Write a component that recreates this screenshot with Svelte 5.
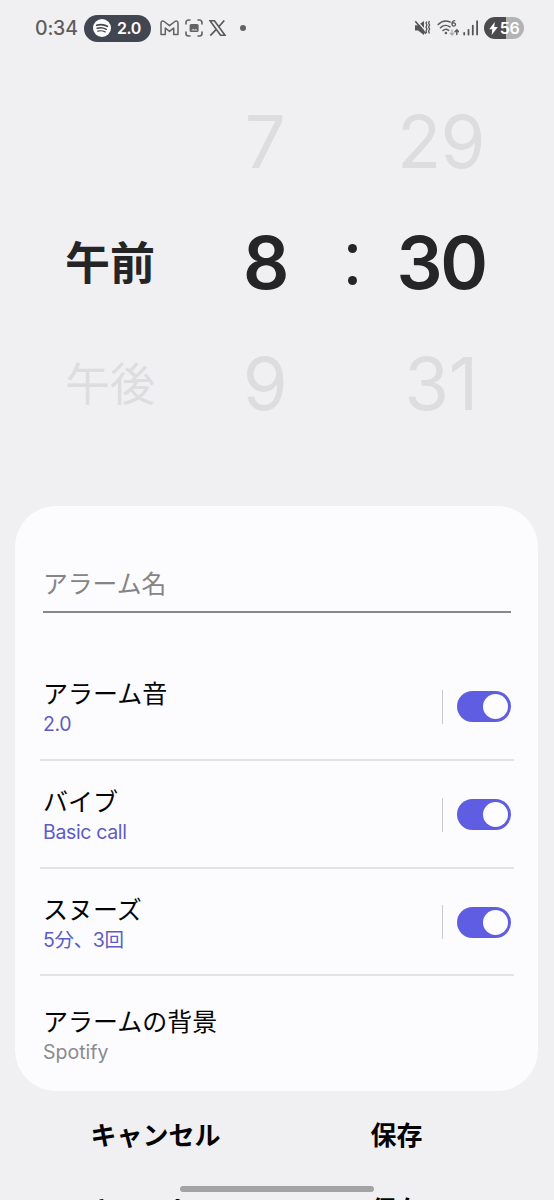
<script>
  let periods = ["", "午前", "午後"];
  let hours = [7, 8, 9];
  let minutes = [29, 30, 31];

  let name = $state("");
  let settings = $state([
    { title: "アラーム音", detail: "2.0", on: true },
    { title: "バイブ", detail: "Basic call", on: true },
    { title: "スヌーズ", detail: "5分、3回", on: true },
    { title: "アラームの背景", detail: "Spotify" },
  ]);
</script>

<div class="screen">
  <header class="status">
    <span class="clock">0:34</span>
    <div class="media">
      <svg width="18" height="18" viewBox="0 0 18 18">
        <circle cx="9" cy="9" r="9" fill="#fff" />
        <g fill="none" stroke="#424650" stroke-linecap="round">
          <path d="M3.700 6.300c3.600-1.100 7.400-.8 10.700 1" stroke-width="1.700" />
          <path d="M4.200 9.300c3-.9 6.300-.6 9.100 1" stroke-width="1.500" />
          <path d="M4.700 12.100c2.600-.7 5.100-.4 7.500.8" stroke-width="1.200" />
        </g>
      </svg>
      <span>2.0</span>
    </div>
    <div class="notices">
      <svg width="19" height="16" viewBox="0 0 19 16" fill="none" stroke="#626265" stroke-width="1.500" stroke-linejoin="round">
        <path d="M1 14.500V3C1 1 2.800.5 4.100 1.500l5.400 4.200 5.400-4.200C16.200.5 18 1 18 3v11.500h-4.300V8l-4.200 3.400L5.300 8v6.500Z" />
      </svg>
      <svg width="18" height="18" viewBox="0 0 18 18" fill="none" stroke="#626265" stroke-width="1.600" stroke-linecap="round">
        <path d="M1 5V3.500A2.500 2.500 0 0 1 3.500 1H5M13 1h1.500A2.500 2.500 0 0 1 17 3.500V5M17 13v1.500a2.500 2.500 0 0 1-2.500 2.500H13M5 17H3.500A2.500 2.500 0 0 1 1 14.500V13" />
        <rect x="4.600" y="5" width="9" height="8" rx="1.500" fill="#626265" stroke="none" />
        <path d="m6 11.500 2.200-1.800 1.500 1L11 9.700l1.500 1.800Z" fill="#d0d0d2" stroke="none" />
      </svg>
      <svg width="17" height="16" viewBox="0 0 17 16" fill="none" stroke="#5a5a5d">
        <path d="M1 .7h4.400L16 15.300h-4.400Z" stroke-width="1.600" />
        <path d="M15.300.5 9.500 7M7.300 9.300 1.300 15.600" stroke-width="1.700" />
      </svg>
    </div>
    <i class="more"></i>
    <div class="radios">
      <svg width="17" height="18" viewBox="0 0 17 18" fill="none" stroke="#555558">
        <path d="M1 6.300h3L10 2v14l-6-4.500H1Z" fill="#555558" stroke="none" />
        <path d="m2.700 1.500 9 10.500" stroke="#f0f0f2" stroke-width="1.300" />
        <path d="m1.300 2.200 10.500 12.600" stroke-width="1.600" />
        <path d="M12.700 2.500 12 4l.9 2-.9 2 .9 2-.9 2 .7 2M15.400 2l-.8 2 1 2-1 2 1 2-1 2 .8 2.500" stroke-width="1.300" />
      </svg>
      <svg width="22" height="18" viewBox="0 0 22 18" fill="none" stroke="#5c5c5f" stroke-width="1.600" stroke-linecap="round">
        <path d="M1.200 5.500C4.500 2 9 1.200 13 3M3.500 8.700c2.500-2.500 6.500-2.900 9.500-.8M6 11.500c1.700-1.500 4-1.500 5.600-.2" />
        <circle cx="8.900" cy="14" r="1.300" fill="#5c5c5f" stroke="none" />
        <path d="M17.700 1.600c-2 .1-3 2-2.700 4 .5 2.200 3.600 1.800 3.500-.2-.1-1.900-2.700-2-3.400-.5" stroke-width="1.400" />
        <path d="M15 11v5m-1.700-1.800L15 16l1.700-1.800" stroke="#adadb0" stroke-width="1.300" />
        <path d="M19.800 15.500V11M18 12.700l1.800-1.900 1.800 1.900" stroke-width="1.500" />
      </svg>
      <svg class="signal" width="16" height="16" viewBox="0 0 16 16" stroke="#555558" stroke-width="1.800" stroke-linecap="round">
        <path d="M1.200 12.800v1.800M5.500 9.800v4.800M9.800 5.600v9M14.100 1.200v13.400" />
      </svg>
      <div class="battery">
        <svg width="9" height="13" viewBox="0 0 8 12"><path d="M5.200 0 0 6.700h2.900L2.300 12 8 4.600H4.700Z" fill="#fff" /></svg>
        <span>56</span>
      </div>
    </div>
  </header>

  <section class="picker">
    <div class="wheel period">
      {#each periods as value, i}
        <span class:current={i === 1}>{value}</span>
      {/each}
    </div>
    <div class="wheel hour">
      {#each hours as value, i}
        <span class:current={i === 1}>{value}</span>
      {/each}
    </div>
    <div class="colon"><i></i><i></i></div>
    <div class="wheel minute">
      {#each minutes as value, i}
        <span class:current={i === 1}>{value}</span>
      {/each}
    </div>
  </section>

  <main class="card">
    <input class="name" placeholder="アラーム名" bind:value={name} />
    {#each settings as item}
      <div class="row">
        <div class="label">
          <div class="title">{item.title}</div>
          <div class="detail" class:plain={item.on === undefined}>{item.detail}</div>
        </div>
        {#if item.on !== undefined}
          <i class="bar"></i>
          <button class="switch" class:on={item.on} aria-label={item.title} onclick={() => (item.on = !item.on)}>
            <i></i>
          </button>
        {/if}
      </div>
    {/each}
  </main>

  <!-- the second set of buttons peeks in at the bottom edge -->
  <footer>
    {#each [0, 1] as _}
      <div class="actions">
        <button>キャンセル</button>
        <button>保存</button>
      </div>
    {/each}
  </footer>
  <div class="home"></div>
</div>

<style>
  :global(body) {
    margin: 0;
    background: #f0f0f2;
  }

  .screen {
    width: 554px;
    height: 1200px;
    position: relative;
    overflow: hidden;
    display: flex;
    flex-direction: column;
    background: #f0f0f2;
    font-family: Inter, "Noto Sans CJK JP", sans-serif;
  }

  button {
    border: 0;
    padding: 0;
    background: none;
    font-family: inherit;
    color: inherit;
    cursor: pointer;
  }

  .status {
    height: 56px;
    box-sizing: border-box;
    padding: 0 30px 0 35px;
    display: flex;
    align-items: center;
    flex-shrink: 0;
  }

  .clock {
    width: 49px;
    font-size: 19.5px;
    font-weight: 500;
    letter-spacing: -0.2px;
    color: #5d5d60;
  }

  .media {
    width: 67px;
    height: 27px;
    box-sizing: border-box;
    padding-left: 9px;
    border-radius: 14px;
    background: #424650;
    color: #fff;
    display: flex;
    align-items: center;
    gap: 6px;
    font-size: 16px;
    font-weight: 600;
    letter-spacing: -0.5px;
  }

  .notices {
    display: flex;
    align-items: center;
    gap: 6px;
    margin-left: 9px;
  }

  .more {
    width: 6px;
    height: 6px;
    border-radius: 50%;
    background: #626265;
    margin-left: 14px;
  }

  .radios {
    margin-left: auto;
    display: flex;
    align-items: center;
  }

  .radios svg:nth-child(2) {
    margin-left: 6px;
  }

  .radios .signal {
    margin-left: 4px;
  }

  .battery {
    width: 40px;
    height: 22px;
    margin-left: 5px;
    border-radius: 11px;
    background: linear-gradient(90deg, #4b4b4d 56%, #b3b3b5 56%);
    display: flex;
    align-items: center;
    justify-content: center;
    gap: 2px;
    color: #fff;
    font-size: 16px;
    font-weight: 600;
    letter-spacing: -0.3px;
  }

  .picker {
    height: 450px;
    box-sizing: border-box;
    padding: 25px 32px 0;
    display: flex;
    flex-shrink: 0;
  }

  .wheel {
    display: flex;
    flex-direction: column;
    font-size: 72.5px;
    letter-spacing: -0.5px;
    color: #dddddf;
  }

  .wheel span {
    height: 121px;
    line-height: 121px;
    text-align: center;
  }

  .wheel .current {
    color: #252527;
    font-weight: 600;
    letter-spacing: -2.5px;
  }

  .period {
    width: 156px;
    padding-top: 1px;
    font-size: 45px;
    letter-spacing: 0;
  }

  .period .current {
    font-weight: 700;
    letter-spacing: 0;
  }

  .hour {
    width: 154px;
  }

  .minute {
    width: 156px;
  }

  .colon {
    width: 21px;
    height: 367px;
    display: flex;
    flex-direction: column;
    align-items: center;
    justify-content: center;
    gap: 23px;
  }

  .colon i {
    width: 9px;
    height: 9px;
    border-radius: 50%;
    background: #252527;
  }

  .card {
    width: 523px;
    height: 584.5px;
    box-sizing: border-box;
    margin: 0 0 0 15px;
    padding: 51px 24px 0 25px;
    border-radius: 41px;
    background: #fcfcfe;
    flex-shrink: 0;
  }

  .name {
    display: block;
    width: 468px;
    height: 56px;
    box-sizing: border-box;
    margin: 0 0 40px 3px;
    padding: 0;
    border: 0;
    border-bottom: 2px solid #88888a;
    background: none;
    outline: 0;
    font-family: inherit;
    font-size: 24.8px;
    color: #000;
  }

  .name::placeholder {
    color: #858587;
    opacity: 1;
  }

  .row {
    height: 107.8px;
    box-sizing: border-box;
    padding: 2px 3px 0;
    display: flex;
    align-items: center;
    border-bottom: 2px solid #e3e3e5;
  }

  .row:last-child {
    border: 0;
    height: 118px;
  }

  .label {
    flex: 1;
    padding-top: 3px;
  }

  .row:last-child .label {
    padding-top: 0;
  }

  .title {
    font-size: 25px;
    line-height: 32px;
    color: #050505;
  }

  .detail {
    font-size: 19.5px;
    line-height: 28px;
    letter-spacing: -0.35px;
    color: #5c5bc7;
  }

  .detail.plain {
    letter-spacing: 0;
    color: #8a8a8c;
  }

  .bar {
    width: 1px;
    height: 34px;
    background: #c9c9cc;
    margin-right: 14px;
  }

  .switch {
    width: 54px;
    height: 31px;
    box-sizing: border-box;
    padding: 3px;
    border-radius: 16px;
    background: #b5b5b8;
    display: flex;
  }

  .switch.on {
    background: #5f5ee2;
    justify-content: flex-end;
  }

  .switch i {
    width: 25px;
    height: 25px;
    border-radius: 50%;
    background: #fdfdff;
  }

  footer {
    padding: 5px 37px 0 35px;
  }

  .actions {
    height: 75px;
    display: flex;
  }

  .actions button {
    flex: 1;
    font-size: 26px;
    font-weight: 700;
    color: #050505;
  }

  .home {
    position: absolute;
    left: 180px;
    top: 1186px;
    width: 194px;
    height: 6px;
    border-radius: 3px;
    background: #a3a3a5;
  }
</style>
